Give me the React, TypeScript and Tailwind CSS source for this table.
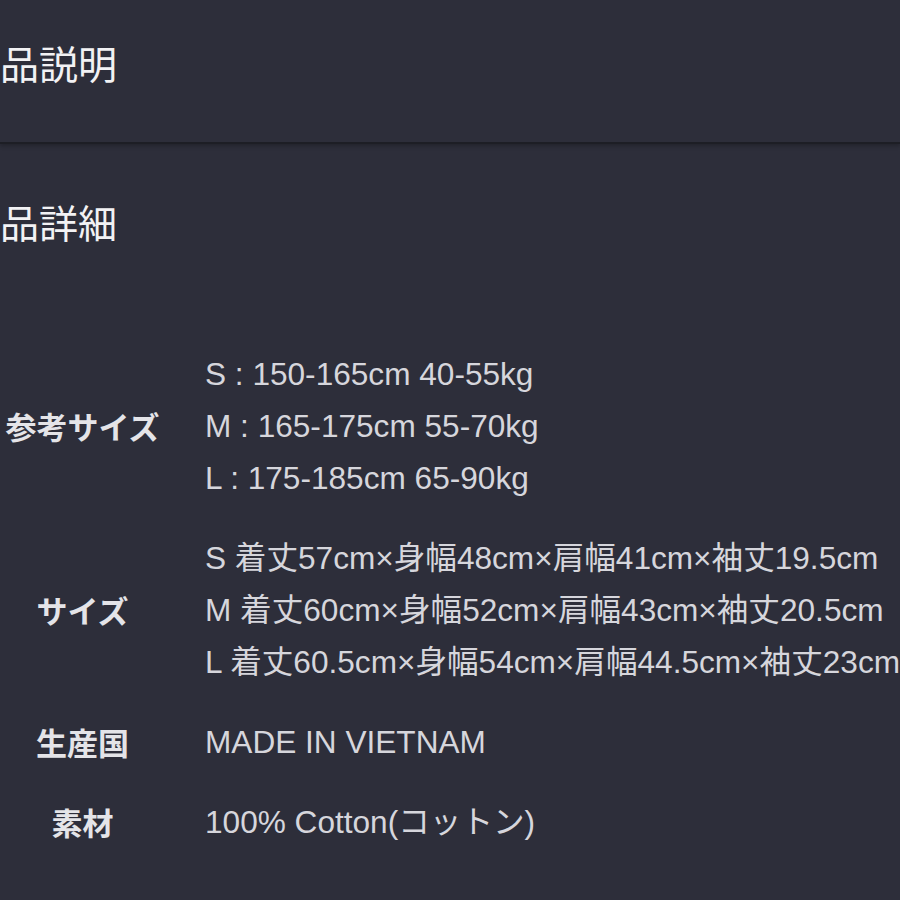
const jp = "font-['Liberation_Sans','Noto_Sans_CJK_JP',sans-serif]";

const rows: { label: string; lines: string[] }[] = [
  {
    label: '参考サイズ',
    lines: ['S : 150-165cm 40-55kg', 'M : 165-175cm 55-70kg', 'L : 175-185cm 65-90kg'],
  },
  {
    label: 'サイズ',
    lines: [
      'S 着丈57cm×身幅48cm×肩幅41cm×袖丈19.5cm',
      'M 着丈60cm×身幅52cm×肩幅43cm×袖丈20.5cm',
      'L 着丈60.5cm×身幅54cm×肩幅44.5cm×袖丈23cm',
    ],
  },
  { label: '生産国', lines: ['MADE IN VIETNAM'] },
  { label: '素材', lines: ['100% Cotton(コットン)'] },
];

export default function App() {
  return (
    <div className={`w-[900px] h-[900px] overflow-hidden bg-[#2d2e3a] ${jp}`}>
      {/* 商品説明 */}
      <div className="h-[144px] flex items-center border-b-2 border-[#1d1e25] shadow-[0_2px_4px_rgba(0,0,0,0.25)]">
        <h2 className="ml-[-39px] text-[39px] leading-none text-[#f2f2f4] font-['Noto_Sans_CJK_JP',sans-serif] pb-[18px]">
          商品説明
        </h2>
      </div>

      {/* 商品詳細 */}
      <div className="h-[162px] flex items-center">
        <h2 className="ml-[-39px] text-[39px] leading-none text-[#f2f2f4] font-['Noto_Sans_CJK_JP',sans-serif] pb-[8px]">
          商品詳細
        </h2>
      </div>

      <div className="pt-[28px]">
        {rows.map((row) => (
          <div key={row.label} className="flex items-center py-[14px]">
            <div className="w-[165px] shrink-0 text-center text-[31px] font-bold text-[#e4e4e8] font-['Noto_Sans_CJK_JP',sans-serif]">
              {row.label}
            </div>
            <div className="pl-[40px] text-[31.6px] leading-[52px] text-[#d6d6dc] whitespace-nowrap">
              {row.lines.map((l) => (
                <div key={l}>{l}</div>
              ))}
            </div>
          </div>
        ))}
      </div>
    </div>
  );
}
